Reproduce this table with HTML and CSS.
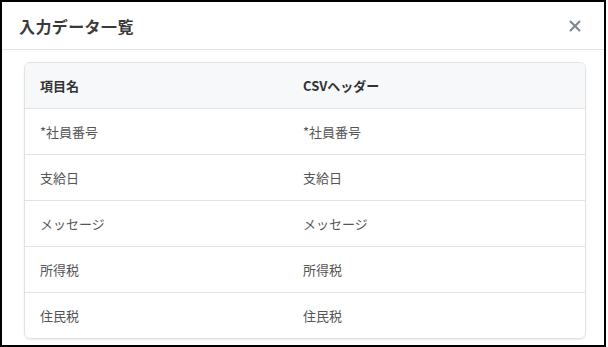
FILE: index.html
```html
<!DOCTYPE html>
<html lang="ja">
<head>
<meta charset="utf-8">
<link rel="stylesheet" href="styles.css">
</head>
<body>
<div class="modal">
  <div class="modal-header">
    <h1 class="title">入力データ一覧</h1>
    <button class="close" aria-label="閉じる">
      <svg width="12" height="12" viewBox="0 0 12 12"><path d="M1.5 1.5 L10.5 10.5 M10.5 1.5 L1.5 10.5" stroke="#7d8590" stroke-width="2" stroke-linecap="round"/></svg>
    </button>
  </div>
  <div class="modal-body">
    <div class="card">
      <div class="row head"><div class="cell">項目名</div><div class="cell">CSVヘッダー</div></div>
      <div class="row"><div class="cell">*社員番号</div><div class="cell">*社員番号</div></div>
      <div class="row"><div class="cell">支給日</div><div class="cell">支給日</div></div>
      <div class="row"><div class="cell">メッセージ</div><div class="cell">メッセージ</div></div>
      <div class="row"><div class="cell">所得税</div><div class="cell">所得税</div></div>
      <div class="row last"><div class="cell">住民税</div><div class="cell">住民税</div></div>
    </div>
  </div>
</div>
</body>
</html>
```

FILE: styles.css
```css
html, body {
  margin: 0;
  padding: 0;
  background: #fff;
}
body {
  font-family: "Noto Sans CJK JP", "Noto Sans", sans-serif;
  color: #444;
}
.modal {
  width: 602px;
  height: 343px;
  border: 2px solid #000;
  box-sizing: content-box;
  background: #fff;
  overflow: hidden;
}
.modal-header {
  height: 47px;
  border-bottom: 1px solid #e3e3e3;
  display: flex;
  align-items: center;
  justify-content: space-between;
  padding: 0 23px 0 17px;
}
.title {
  margin: 0;
  font-size: 16px;
  font-weight: 700;
  color: #3a3a3a;
  letter-spacing: 0.4px;
}
.close {
  border: 0;
  background: none;
  padding: 0;
  width: 12px;
  height: 12px;
  display: flex;
}
.modal-body {
  padding: 12px 18px 0 22px;
}
.card {
  border: 1px solid #e2e2e2;
  border-radius: 6px;
  box-shadow: 0 1px 2px rgba(0,0,0,0.08);
  overflow: hidden;
}
.row {
  display: grid;
  grid-template-columns: 263px 1fr;
  height: 45px;
  border-bottom: 1px solid #e3e3e3;
  align-items: center;
  font-size: 13px;
  color: #555;
}
.row.last {
  border-bottom: 0;
}
.row.head {
  background: #f7f8fa;
  font-weight: 700;
  color: #333;
}
.cell {
  padding-left: 15px;
}
```
